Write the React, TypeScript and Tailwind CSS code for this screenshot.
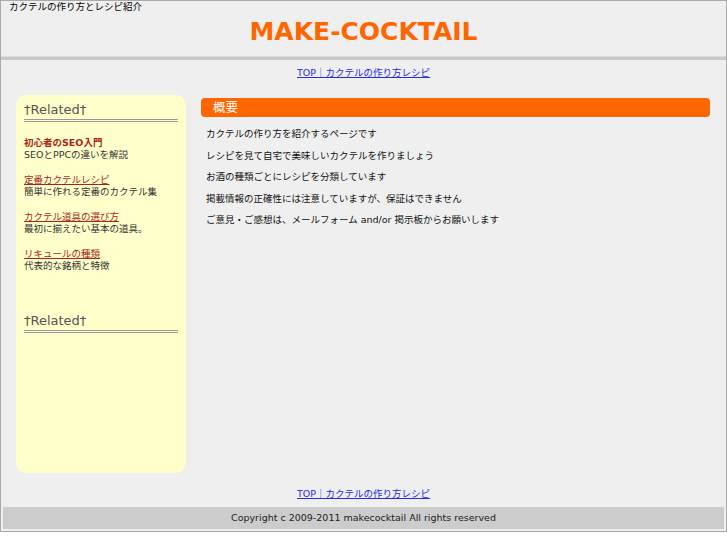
import React from 'react';

const font = { fontFamily: '"DejaVu Sans", "Noto Sans CJK JP", sans-serif' };

const relatedItems = [
  { title: '初心者のSEO入門', desc: 'SEOとPPCの違いを解説', first: true },
  { title: '定番カクテルレシピ', desc: '簡単に作れる定番のカクテル集' },
  { title: 'カクテル道具の選び方', desc: '最初に揃えたい基本の道具。' },
  { title: 'リキュールの種類', desc: '代表的な銘柄と特徴' },
];

const lines = [
  'カクテルの作り方を紹介するページです',
  'レシピを見て自宅で美味しいカクテルを作りましょう',
  'お酒の種類ごとにレシピを分類しています',
  '掲載情報の正確性には注意していますが、保証はできません',
  'ご意見・ご感想は、メールフォーム and/or 掲示板からお願いします',
];

function NavLink() {
  return (
    <a href="#" className="text-[#2a2ae0] underline">
      TOP｜カクテルの作り方レシピ
    </a>
  );
}

function RelatedHeading() {
  return (
    <div className="pt-[7px] pb-px border-b-[3px] border-double border-[#999]">
      <h3 className="text-[13px] leading-[16px] text-[#555]">†Related†</h3>
    </div>
  );
}

export default function App() {
  return (
    <div className="min-h-[545px] bg-white" style={font}>
      <div className="w-[727px] border border-[#aaa] bg-[#efefef]">
        {/* header */}
        <div className="h-[55px] px-[8px]">
          <p className="text-[9.5px] leading-[12px] text-black">カクテルの作り方とレシピ紹介</p>
          <h1 className="mt-[5px] text-center text-[25px] leading-[28px] font-bold text-[#ff6600]">
            MAKE-COCKTAIL
          </h1>
        </div>
        <div className="h-px bg-[#dddddd]" />
        <div className="h-[3px] bg-[#c8c8c8]" />

        <div className="h-[35px] pt-[6px] text-center text-[9.5px] leading-[14px]">
          <NavLink />
        </div>

        <div className="flex gap-[15px] pl-[15px] pr-[16px]">
          {/* sidebar */}
          <aside className="w-[170px] h-[378px] shrink-0 rounded-[10px] bg-[#ffffcc] px-[8px]">
            <RelatedHeading />
            <div className="mt-[15px] flex flex-col gap-[13px]">
              {relatedItems.map((item) => (
                <div key={item.title} className="text-[9.5px] leading-[12px]">
                  <a
                    href="#"
                    className={
                      item.first
                        ? 'block font-bold text-[#aa1f1f]'
                        : 'block text-[#aa1f1f] underline'
                    }
                  >
                    {item.title}
                  </a>
                  <p className="text-[#333]">{item.desc}</p>
                </div>
              ))}
            </div>
            <div className="mt-[34px]">
              <RelatedHeading />
            </div>
          </aside>

          {/* main */}
          <main className="flex-1">
            <div className="mt-[3px] h-[19px] rounded-[4px] bg-[#ff6600] px-[12px] flex items-center">
              <h2 className="text-[12.5px] leading-[14px] text-white">概要</h2>
            </div>
            <div className="mt-[11px] pl-[5px] flex flex-col gap-[9.5px]">
              {lines.map((line) => (
                <p key={line} className="text-[9.5px] leading-[12px] text-[#111]">
                  {line}
                </p>
              ))}
            </div>
          </main>
        </div>

        <div className="mt-[14px] h-[20px] text-center text-[9.5px] leading-[14px]">
          <NavLink />
        </div>

        <div className="mx-[2px] mb-[2px] h-[22px] bg-[#cccccc] flex items-center justify-center">
          <p className="text-[9.5px] leading-[12px] text-[#222]">
            Copyright c 2009-2011 makecocktail All rights reserved
          </p>
        </div>
      </div>
    </div>
  );
}
